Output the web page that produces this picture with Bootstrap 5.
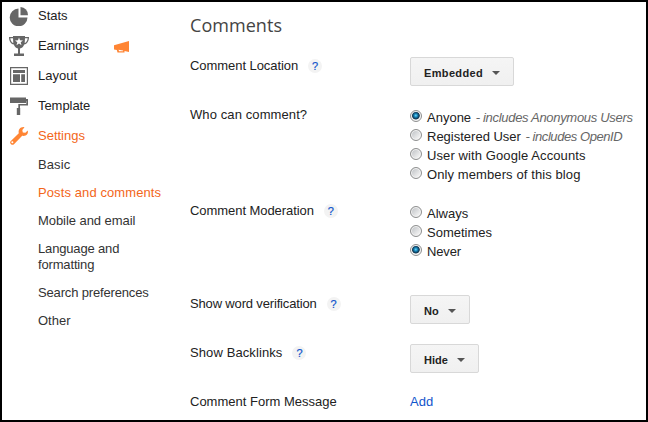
<!DOCTYPE html>
<html lang="en">
<head>
    <meta charset="UTF-8">
    <meta name="viewport" content="width=device-width, initial-scale=1.0">
    <title>Posts and comments</title>
    <!-- Bootstrap CSS -->
    <link href="https://cdn.jsdelivr.net/npm/bootstrap@5.3.3/dist/css/bootstrap.min.css" rel="stylesheet">
    <!-- Custom CSS -->
    <style>
        body {
            font-family: "Liberation Sans", Arial, sans-serif;
            font-size: 13px;
            line-height: 16px;
            color: #222;
            background: #fff;
        }
        .page {
            height: 422px;
            border: 2px solid #000;
        }
        .sidebar {
            width: 188px;
            padding-left: 7px;
            margin-top: -1px;
        }
        .side-link {
            height: 30px;
            color: #222;
            text-decoration: none;
        }
        .side-link svg {
            width: 20px;
            height: 20px;
            margin-right: 9px;
            fill: #666;
        }
        .side-link .promo {
            width: 16px;
            height: 12px;
            margin: 2px 0 0 25px;
            fill: #ff8534;
        }
        .side-link.current, .sub-link.current {
            color: #f3661a;
        }
        .side-link.current svg {
            fill: #ff8534;
        }
        .sub-links {
            padding-left: 29px;
            width: 130px;
        }
        .sub-link {
            padding: 6px 0;
            color: #333;
            text-decoration: none;
        }
        .sub-link.nowrap {
            white-space: nowrap;
        }
        /* small tracking adjustments */
        .loose {
            letter-spacing: .1px;
        }
        .snug {
            letter-spacing: -.06px;
        }
        .tight {
            letter-spacing: -.16px;
        }
        .section-title {
            height: 55px;
            margin: 0;
            padding-top: 12px;
            font-family: "Open Sans", sans-serif;
            font-size: 18px;
            font-weight: 400;
            line-height: 22px;
            letter-spacing: .05px;
            color: #444;
        }
        .setting {
            height: 49px;
        }
        .setting.tall {
            height: 96px;
        }
        .setting.medium {
            height: 93px;
        }
        .setting-name {
            width: 220px;
            height: 18px;
        }
        .help {
            width: 14px;
            height: 14px;
            margin-left: 10px;
            border-radius: 50%;
            background: #f3f3f3;
            color: #15c;
            font-size: 11px;
            line-height: 14px;
            letter-spacing: 0;
            text-align: center;
            text-decoration: none;
            -webkit-text-stroke: .2px #15c;
        }
        .select-btn {
            height: 29px;
            padding: 2px 13px 0;
            border: 1px solid #d8d8d8;
            border-radius: 2px;
            background: linear-gradient(#f5f5f5, #f0f0f0);
            color: #222;
            font-size: 11px;
            font-weight: 700;
            line-height: 16px;
            letter-spacing: .35px;
        }
        .select-btn.short {
            letter-spacing: 0;
        }
        .caret {
            border: 4px solid transparent;
            border-top-color: #555;
            border-bottom: 0;
            margin-left: 9px;
        }
        .choices {
            padding-top: 2px;
        }
        .choice {
            height: 19px;
            white-space: nowrap;
        }
        .choice input {
            appearance: none;
            width: 12px;
            height: 12px;
            margin: 0 5px 3px 0;
            border: 1px solid #8e8f8f;
            border-radius: 50%;
            background: linear-gradient(135deg, #c4c7ca 15%, #f2f2f2 80%);
            box-shadow: inset 0 0 0 1px #f4f4f4;
        }
        .choice input:checked {
            background: radial-gradient(circle at 48% 45%, #6fdcfa 0, #1c8cc0 1.5px, #0c4568 3px, #17364b 3.6px, #f4f4f4 4.4px);
        }
        .choice i {
            color: #666;
            letter-spacing: -.31px;
            margin-left: 1px;
        }
        .choice i.end-note {
            letter-spacing: -.44px;
        }
        .add-link {
            color: #15c;
            text-decoration: none;
        }
    </style>
</head>
<body>
    <div class="page d-flex overflow-hidden">
        <!-- Sidebar -->
        <nav class="sidebar flex-shrink-0 d-flex flex-column">
            <a href="#" class="side-link d-flex align-items-center">
                <svg viewBox="0 0 20 20"><path d="M9.500 2.500V11.500h9A8.900 8.900 0 1 1 9.500 2.500z"/><path d="M11.500 1a7.800 7.800 0 0 1 7.500 8.200H11.500z"/></svg>
                Stats
            </a>
            <a href="#" class="side-link d-flex align-items-center">
                <svg viewBox="0 0 20 20">
                    <path fill-rule="evenodd" d="M4 0h12v1h4c0 4-1.800 7-4.800 7.500-.8 2.200-2.200 3.500-4.200 4V17.500h4V20H5v-2.500h4v-5c-2-.5-3.400-1.800-4.200-4C1.800 8 0 5 0 1h4zM1.300 2.200C1.600 4.600 2.600 6.500 4.300 7L4 2.200zM18.700 2.200H16L15.700 7c1.700-.5 2.700-2.400 3-4.800zM10 1.500L9 4.200l-3 .2 2.300 1.900L7.500 9.200 10 7.500l2.500 1.700-.8-2.900L14 4.400l-3-.2z"/>
                </svg>
                <span class="snug">Earnings</span>
                <svg class="promo" viewBox="0 0 16 12"><path fill-rule="evenodd" d="M15 0v11l-4.500-1v1.500H3.500L2.800 9 0 8.500V4.200zM4.500 8.800l.6 1.500h4V9.600z"/></svg>
            </a>
            <a href="#" class="side-link d-flex align-items-center">
                <svg viewBox="0 0 20 20"><path fill-rule="evenodd" d="M1 1h18v18H1zM2.200 2.200v15.600h15.600V2.200z"/><path d="M4 4h12v3H4zM4 8.200h7V16H4zM12.200 8.200H16V16h-3.800z"/></svg>
                Layout
            </a>
            <a href="#" class="side-link d-flex align-items-center">
                <svg viewBox="0 0 20 20"><path d="M1 1.500h16V3h2v6.500h-8V12h.2v7H7.800v-7h1.500V8h8V5H17v2H1z"/></svg>
                <span class="snug">Template</span>
            </a>
            <a href="#" class="side-link current d-flex align-items-center">
                <svg viewBox="0 0 20 20"><path fill-rule="evenodd" d="M14.500 1l1 .3L13.300 4l.5 2.500 2.600.3L18.700 4.500c1 3-1.200 6-5.500 5.300L5 18.200C3 20 0 17.200 1.600 15.200L9.800 7.300C9 4 11 1 14.500 1zM3.300 15.300a1 1 0 1 0 .1 2 1 1 0 1 0-.1-2z"/></svg>
                Settings
            </a>
            <div class="sub-links d-flex flex-column">
                <a href="#" class="sub-link loose">Basic</a>
                <a href="#" class="sub-link nowrap loose current">Posts and comments</a>
                <a href="#" class="sub-link snug">Mobile and email</a>
                <a href="#" class="sub-link tight">Language and formatting</a>
                <a href="#" class="sub-link nowrap tight">Search preferences</a>
                <a href="#" class="sub-link">Other</a>
            </div>
        </nav>

        <!-- Comment settings -->
        <main class="flex-grow-1">
            <h2 class="section-title">Comments</h2>

            <div class="setting d-flex align-items-start">
                <div class="setting-name snug d-flex align-items-center">Comment Location <a href="#" class="help">?</a></div>
                <button type="button" class="select-btn d-flex align-items-center">Embedded <span class="caret"></span></button>
            </div>

            <div class="setting tall d-flex align-items-start">
                <div class="setting-name loose d-flex align-items-center">Who can comment?</div>
                <div class="choices">
                    <label class="choice d-flex align-items-center"><input type="radio" name="who" checked><span>Anyone <i>- includes Anonymous Users</i></span></label>
                    <label class="choice d-flex align-items-center"><input type="radio" name="who"><span>Registered User <i class="end-note">- includes OpenID</i></span></label>
                    <label class="choice d-flex align-items-center"><input type="radio" name="who"><span class="loose">User with Google Accounts</span></label>
                    <label class="choice d-flex align-items-center"><input type="radio" name="who"><span class="loose">Only members of this blog</span></label>
                </div>
            </div>

            <div class="setting medium d-flex align-items-start">
                <div class="setting-name snug d-flex align-items-center">Comment Moderation <a href="#" class="help">?</a></div>
                <div class="choices">
                    <label class="choice d-flex align-items-center"><input type="radio" name="moderation"><span>Always</span></label>
                    <label class="choice d-flex align-items-center"><input type="radio" name="moderation"><span>Sometimes</span></label>
                    <label class="choice d-flex align-items-center"><input type="radio" name="moderation" checked><span class="tight">Never</span></label>
                </div>
            </div>

            <div class="setting d-flex align-items-start">
                <div class="setting-name tight d-flex align-items-center">Show word verification <a href="#" class="help">?</a></div>
                <button type="button" class="select-btn short d-flex align-items-center">No <span class="caret"></span></button>
            </div>

            <div class="setting d-flex align-items-start">
                <div class="setting-name loose d-flex align-items-center">Show Backlinks <a href="#" class="help">?</a></div>
                <button type="button" class="select-btn short d-flex align-items-center">Hide <span class="caret"></span></button>
            </div>

            <div class="d-flex align-items-center">
                <div class="setting-name d-flex align-items-center">Comment Form Message</div>
                <a href="#" class="add-link">Add</a>
            </div>
        </main>
    </div>

    <!-- Bootstrap JS -->
    <script src="https://cdn.jsdelivr.net/npm/bootstrap@5.3.3/dist/js/bootstrap.bundle.min.js"></script>
</body>
</html>
